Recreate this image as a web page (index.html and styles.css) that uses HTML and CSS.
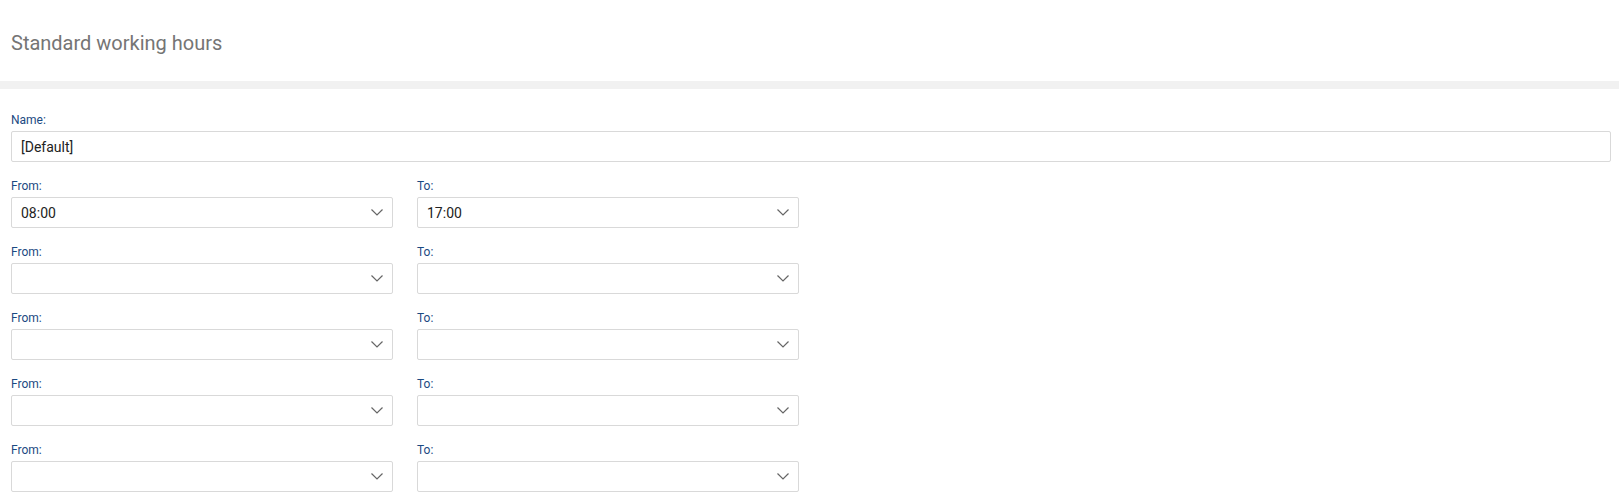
FILE: index.html
```html
<!DOCTYPE html>
<html lang="en">
<head>
    <meta charset="UTF-8">
    <meta name="viewport" content="width=device-width, initial-scale=1.0">
    <title>Standard working hours</title>
    <link rel="stylesheet" href="styles.css">
</head>
<body>
    <div class="header">
        <h1>Standard working hours</h1>
    </div>

    <div class="content">
        <div class="field">
            <label>Name:</label>
            <div class="input">[Default]</div>
        </div>

        <div class="row">
            <div class="field col">
                <label>From:</label>
                <div class="input select">08:00
                    <svg class="chevron" width="12" height="7" viewBox="0 0 12 7"><polyline points="0.5,0.5 6,6 11.5,0.5"/></svg>
                </div>
            </div>
            <div class="field col">
                <label>To:</label>
                <div class="input select">17:00
                    <svg class="chevron" width="12" height="7" viewBox="0 0 12 7"><polyline points="0.5,0.5 6,6 11.5,0.5"/></svg>
                </div>
            </div>
        </div>

        <div class="row">
            <div class="field col">
                <label>From:</label>
                <div class="input select">
                    <svg class="chevron" width="12" height="7" viewBox="0 0 12 7"><polyline points="0.5,0.5 6,6 11.5,0.5"/></svg>
                </div>
            </div>
            <div class="field col">
                <label>To:</label>
                <div class="input select">
                    <svg class="chevron" width="12" height="7" viewBox="0 0 12 7"><polyline points="0.5,0.5 6,6 11.5,0.5"/></svg>
                </div>
            </div>
        </div>

        <div class="row">
            <div class="field col">
                <label>From:</label>
                <div class="input select">
                    <svg class="chevron" width="12" height="7" viewBox="0 0 12 7"><polyline points="0.5,0.5 6,6 11.5,0.5"/></svg>
                </div>
            </div>
            <div class="field col">
                <label>To:</label>
                <div class="input select">
                    <svg class="chevron" width="12" height="7" viewBox="0 0 12 7"><polyline points="0.5,0.5 6,6 11.5,0.5"/></svg>
                </div>
            </div>
        </div>

        <div class="row">
            <div class="field col">
                <label>From:</label>
                <div class="input select">
                    <svg class="chevron" width="12" height="7" viewBox="0 0 12 7"><polyline points="0.5,0.5 6,6 11.5,0.5"/></svg>
                </div>
            </div>
            <div class="field col">
                <label>To:</label>
                <div class="input select">
                    <svg class="chevron" width="12" height="7" viewBox="0 0 12 7"><polyline points="0.5,0.5 6,6 11.5,0.5"/></svg>
                </div>
            </div>
        </div>

        <div class="row">
            <div class="field col">
                <label>From:</label>
                <div class="input select">
                    <svg class="chevron" width="12" height="7" viewBox="0 0 12 7"><polyline points="0.5,0.5 6,6 11.5,0.5"/></svg>
                </div>
            </div>
            <div class="field col">
                <label>To:</label>
                <div class="input select">
                    <svg class="chevron" width="12" height="7" viewBox="0 0 12 7"><polyline points="0.5,0.5 6,6 11.5,0.5"/></svg>
                </div>
            </div>
        </div>
    </div>
</body>
</html>
```

FILE: styles.css
```css
body {
    font-family: Roboto, "Liberation Sans", sans-serif;
    background-color: white;
    margin: 0;
    padding: 0;
}
.header {
    height: 50px;
    padding: 31px 11px 0;
    border-bottom: 8px solid #f1f1f1;
}
h1 {
    margin: 0;
    font-size: 20px;
    line-height: 24px;
    font-weight: normal;
    color: #757575;
}
.content {
    padding: 23px 8px 0 11px;
}
.field {
    display: flex;
    flex-direction: column;
    gap: 3px;
    margin-bottom: 16px;
}
.field label {
    font-size: 12px;
    line-height: 16px;
    color: #1b4a82;
}
.input {
    height: 31px;
    box-sizing: border-box;
    border: 1px solid #d9d9d9;
    border-radius: 2px;
    padding: 0 9px;
    font-size: 14px;
    color: #222;
    display: flex;
    align-items: center;
}
.row {
    display: flex;
    gap: 24px;
}
.col {
    width: 382px;
}
.select {
    justify-content: space-between;
}
.chevron {
    margin-left: auto;
    fill: none;
    stroke: #666;
    stroke-width: 1.2;
}
```
